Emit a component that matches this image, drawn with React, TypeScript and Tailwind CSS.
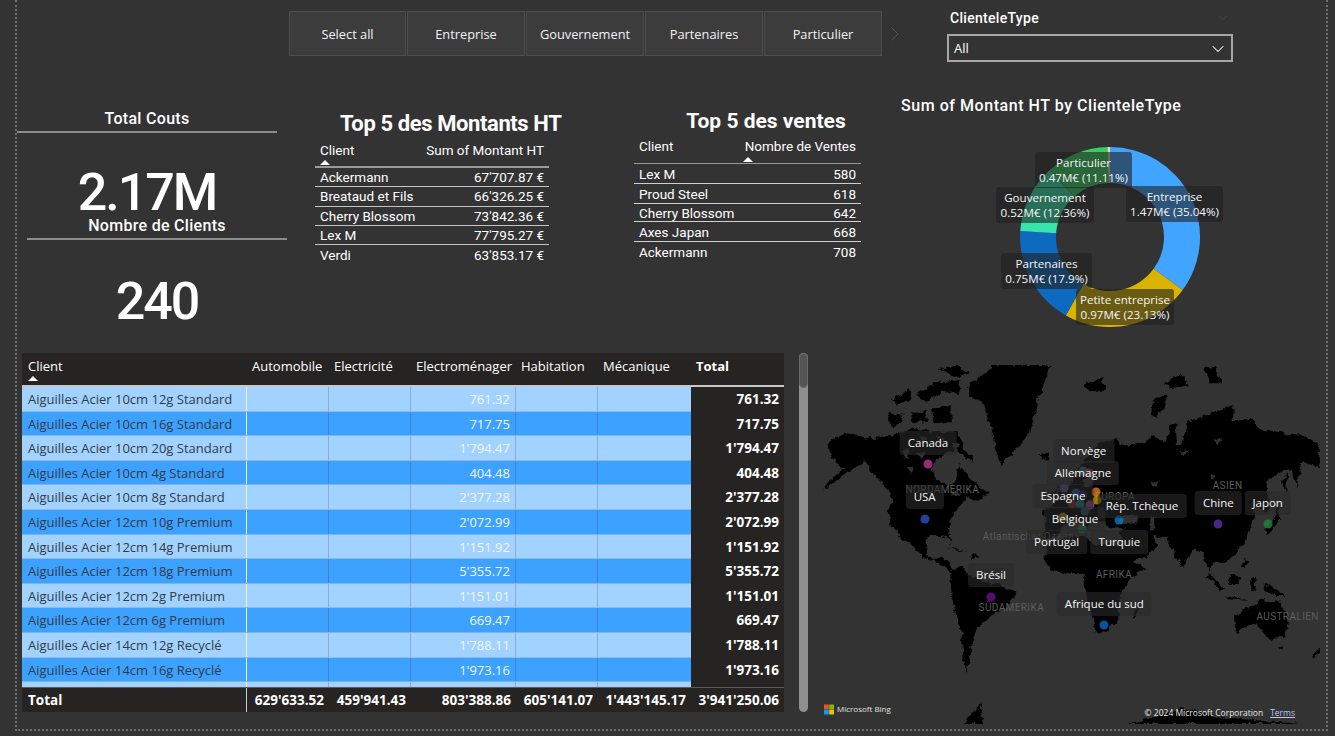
import { ChevronDown, ChevronRight } from 'lucide-react'

const slicers = [
  { label: 'Select all', width: 'w-[117px]' },
  { label: 'Entreprise', width: 'w-[118px]' },
  { label: 'Gouvernement', width: 'w-[118px]' },
  { label: 'Partenaires', width: 'w-[118px]' },
  { label: 'Particulier', width: 'w-[118px]' },
]

const montants = [
  ['Ackermann', "67'707.87 €", 'h-[19px]'],
  ['Breataud et Fils', "66'326.25 €", 'h-[20px]'],
  ['Cherry Blossom', "73'842.36 €", 'h-[19px]'],
  ['Lex M', "77'795.27 €", 'h-[19px]'],
  ['Verdi', "63'853.17 €", 'h-[20px]'],
]

const ventes = [
  ['Lex M', '580', 'h-[20px]'],
  ['Proud Steel', '618', 'h-[20px]'],
  ['Cherry Blossom', '642', 'h-[18px]'],
  ['Axes Japan', '668', 'h-[20px]'],
  ['Ackermann', '708', 'h-[20px]'],
]

const rows = [
  ['Aiguilles Acier 10cm 12g Standard', '761.32'],
  ['Aiguilles Acier 10cm 16g Standard', '717.75'],
  ['Aiguilles Acier 10cm 20g Standard', "1'794.47"],
  ['Aiguilles Acier 10cm 4g Standard', '404.48'],
  ['Aiguilles Acier 10cm 8g Standard', "2'377.28"],
  ['Aiguilles Acier 12cm 10g Premium', "2'072.99"],
  ['Aiguilles Acier 12cm 14g Premium', "1'151.92"],
  ['Aiguilles Acier 12cm 18g Premium', "5'355.72"],
  ['Aiguilles Acier 12cm 2g Premium', "1'151.01"],
  ['Aiguilles Acier 12cm 6g Premium', '669.47'],
  ['Aiguilles Acier 14cm 12g Recyclé', "1'788.11"],
  ['Aiguilles Acier 14cm 16g Recyclé', "1'973.16"],
]

const donut = [
  { pct: 35.04, color: '#41A5FF' },
  { pct: 23.13, color: '#D9B300' },
  { pct: 17.9, color: '#0D6ABF' },
  { pct: 12.36, color: '#37E5AC' },
  { pct: 11.11, color: '#37CF62' },
  { pct: 0.46, color: '#E8DC96' },
]

const donutLabels = [
  { a: 'Particulier', b: '0.47M€ (11.11%)', x: 15, y: 5, w: 97 },
  { a: 'Entreprise', b: '1.47M€ (35.04%)', x: 106, y: 39, w: 97 },
  { a: 'Gouvernement', b: '0.52M€ (12.36%)', x: -24, y: 40, w: 98 },
  { a: 'Partenaires', b: '0.75M€ (17.9%)', x: -19, y: 106, w: 91 },
  { a: 'Petite entreprise', b: '0.97M€ (23.13%)', x: 56, y: 142, w: 98 },
]

const mapFaint = [
  ['NORDAMERIKA', 397, 388],
  ['EUROPA', 915, 408],
  ['ASIEN', 1253, 376],
  ['Atlantischer Ozean', 655, 528],
  ['AFRIKA', 912, 642],
  ['SÜDAMERIKA', 604, 740],
  ['AUSTRALIEN', 1433, 767],
] as const

const mapDots = [
  [354, 311, '#C0339B'], [344, 476, '#2F4FBF'], [543, 710, '#6B0F8A'], [883, 796, '#0A66C2'],
  [1225, 492, '#5A2FA8'], [1373, 492, '#1A8A35'], [928, 480, '#0A78C8'], [820, 332, '#1C7FA0'],
  [838, 338, '#B04A50'], [763, 383, '#6B5AA0'], [798, 398, '#2A5FB0'], [820, 405, '#1A1A80'],
  [857, 396, '#D97A20'], [860, 420, '#C09000'], [785, 433, '#8A2A3A'], [810, 432, '#1A8A7A'],
  [841, 434, '#A84AA0'], [826, 452, '#1A6070'], [758, 470, '#B09020'], [815, 507, '#2A7A40'],
] as const

const mapLabels = [
  ['Canada', 354, 248], ['Norvège', 821, 272], ['Allemagne', 819, 338], ['USA', 344, 412],
  ['Espagne', 759, 407], ['Rép. Tchèque', 996, 437], ['Chine', 1225, 428], ['Japon', 1373, 428],
  ['Belgique', 795, 477], ['Portugal', 740, 545], ['Turquie', 928, 547], ['Brésil', 543, 644],
  ['Afrique du sud', 883, 731],
] as const

// land outlines, 3 units per pixel of the map
const land = [
  // north america
  '30,235 60,212 100,208 170,222 215,215 245,205 290,192 340,195 380,205 420,195 440,245 470,290 440,280 415,250 390,265 360,280 345,300 355,345 395,360 415,350 425,300 450,325 480,360 520,385 490,405 445,400 430,425 410,440 395,475 398,510 405,540 395,520 375,510 340,510 325,530 330,570 350,585 375,575 410,610 395,615 360,590 320,575 285,540 250,515 220,480 212,440 225,405 215,375 195,355 165,320 140,290 110,310 60,345 15,378 50,335 85,310 70,300 45,280',
  // arctic islands
  '210,150 255,145 260,175 225,180',
  '225,105 275,70 285,100 240,120',
  '300,85 350,55 430,45 425,90 380,80 330,110',
  '370,12 420,2 460,25 410,35',
  '345,130 400,120 405,170 350,175',
  '285,145 325,135 330,170 290,175',
  // greenland, iceland
  '450,70 480,40 525,10 525,0 700,0 690,30 680,60 660,120 640,200 600,250 570,280 555,305 540,270 530,210 515,170 495,110 460,90',
  '665,270 695,262 697,282 670,290',
  // caribbean
  '390,545 450,560 425,558',
  '460,570 490,575 465,583',
  // south america
  '399,615 429,605 469,635 529,655 599,680 579,715 529,750 484,785 464,845 449,925 439,875 434,805 404,695',
  // africa, madagascar
  '679,575 709,525 760,515 809,515 830,535 880,540 925,540 950,590 985,610 969,615 930,655 909,695 904,765 869,800 839,807 824,750 809,695 799,625 729,625 699,615',
  '944,760 969,705 964,735 954,760',
  // eurasia
  '680,505 690,470 675,440 720,415 745,375 770,345 790,300 850,230 900,225 935,245 950,240 1010,215 1050,230 1060,180 1075,175 1080,235 1095,240 1110,170 1170,150 1220,130 1245,120 1250,165 1310,165 1330,190 1430,210 1450,205 1505,240 1508,310 1480,300 1460,290 1445,330 1440,370 1425,315 1385,320 1345,360 1350,400 1370,410 1345,440 1320,420 1305,470 1290,520 1260,560 1230,590 1190,590 1180,620 1210,670 1170,600 1155,560 1130,550 1095,610 1065,550 1050,520 1010,515 1018,545 985,575 950,590 925,540 905,500 930,490 880,490 860,470 830,465 810,490 775,450 740,480 720,510 690,520',
  '725,370 745,355 755,405 725,415',
  '705,380 720,378 718,398 702,398',
  '1010,110 1050,90 1040,130 1020,155 1005,150',
  // east and south east asia, oceania
  '1345,495 1375,455 1385,415 1390,465 1350,510',
  '1395,350 1410,320 1408,380',
  '1174,625 1225,675 1210,675 1170,635',
  '1225,690 1300,705 1235,700',
  '1234,630 1270,630 1265,660 1238,660',
  '1300,640 1320,635 1315,675 1300,670',
  '1279,575 1290,590 1285,615 1275,600',
  '1339,655 1404,690 1380,690 1345,675',
  // australia, new zealand
  '1254,750 1279,735 1329,705 1369,715 1384,700 1419,775 1399,815 1359,825 1319,775 1259,805',
  '1384,845 1399,845 1395,855',
  '1484,875 1514,845 1510,860 1495,880',
  // north east of the map
  '800,60 850,40 870,70 820,80',
  '1040,50 1090,30 1120,60 1060,70',
  '1160,15 1190,5 1215,55 1180,55',
  // antarctica
  '440,1077 470,1035 490,1015 500,1077',
  '929,1077 1000,1060 1100,1030 1200,1055 1449,1077',
]

// seas and lakes cut back out of the land
const water = [
  '900,458 960,450 965,472 910,475',
  '1000,455 1015,458 1012,498 1000,495',
  '800,345 835,320 825,360 805,370',
  '350,300 410,300 405,345 360,340',
  '1340,350 1380,330 1370,360',
  '255,255 275,250 270,280',
  '300,265 325,258 318,285',
  '270,310 290,300 285,330',
  '400,230 425,240 420,262',
  '360,215 385,220 372,240',
  '310,215 330,222 315,238',
  '410,375 430,385 405,395',
  '1190,225 1215,220 1205,240',
  '1180,330 1200,335 1185,350',
  '1090,260 1110,255 1100,270',
  '1000,345 1030,350 1010,362',
]

function sector(start: number, end: number) {
  const R = 90
  const r = 54
  const a0 = (start / 100) * Math.PI * 2 - Math.PI / 2
  const a1 = (end / 100) * Math.PI * 2 - Math.PI / 2
  const large = end - start > 50 ? 1 : 0
  const p = (rad: number, a: number) => `${100 + rad * Math.cos(a)} ${100 + rad * Math.sin(a)}`
  return `M${p(R, a0)} A${R} ${R} 0 ${large} 1 ${p(R, a1)} L${p(r, a1)} A${r} ${r} 0 ${large} 0 ${p(r, a0)}Z`
}

function SortArrow({ className }: { className: string }) {
  return <div className={`w-0 h-0 border-x-[5px] border-x-transparent border-b-[5px] border-b-white ${className}`} />
}

function Kpi({ title, value, className, valueClass }: { title: string; value: string; className: string; valueClass: string }) {
  return (
    <div className={`w-[260px] ${className}`}>
      <div className="h-[27px] border-b-2 border-[#8c8c8c] text-center text-white text-[16px] leading-[26px] font-medium tracking-[0.3px] whitespace-nowrap">
        {title}
      </div>
      <div className={`text-center text-white text-[52px] leading-[44px] font-medium tracking-[-2px] ${valueClass}`}>{value}</div>
    </div>
  )
}

export default function App() {
  let acc = 0
  return (
    <div className="w-[1335px] h-[736px] bg-[#333333] overflow-hidden font-[Roboto,sans-serif]">
      <div className="ml-[15px] w-[1313px] h-[731px] border-x-2 border-b-2 border-dotted border-[#6e6e6e]">
        {/* top slicers */}
        <div className="flex h-[56px] pt-[11px]">
          <div className="flex ml-[272px] gap-px h-[45px] font-['Open_Sans',sans-serif]">
            {slicers.map((s) => (
              <div
                key={s.label}
                className={`${s.width} flex items-center justify-center pt-[2px] bg-[#3c3c3c] border border-[#4d4d4d] text-[#f2f2f2] text-[12.8px]`}
              >
                {s.label}
              </div>
            ))}
          </div>
          <ChevronRight className="text-[#555555] mt-[11px] ml-[1px]" size={24} strokeWidth={1} />
          <div className="ml-[40px] w-[286px] -mt-[4px]">
            <div className="flex items-center justify-between h-[27px] pb-[4px] pl-[3px] pr-[3px] text-white text-[14px] font-medium tracking-[0.3px]">
              ClienteleType
              <ChevronDown className="text-[#555555] -mt-[2px]" size={14} strokeWidth={1} />
            </div>
            <div className="h-[28px] border-2 border-[#a6a6a6] flex items-center justify-between pl-[5px] pr-[3px] pt-[2px] text-white text-[13px] font-['Open_Sans',sans-serif]">
              All
              <ChevronDown className="text-white" size={20} strokeWidth={1.25} />
            </div>
          </div>
        </div>

        {/* kpis, top 5 tables and donut */}
        <div className="flex h-[297px]">
          <div className="w-[270px] pt-[50px] text-white">
            <Kpi title="Total Couts" value="2.17M" className="" valueClass="mt-[38px]" />
            <Kpi title="Nombre de Clients" value="240" className="ml-[10px] -mt-[2px]" valueClass="mt-[40px]" />
          </div>

          <div className="ml-[28px] w-[234px] pt-[55px] text-white">
            <div className="pl-[25px] text-[22px] leading-[26px] font-bold tracking-[-0.4px] whitespace-nowrap">Top 5 des Montants HT</div>
            <div className="flex justify-between h-[24px] mt-[1px] px-[5px] text-[13.5px] leading-[24px] font-normal">
              <span>Client</span>
              <span>Sum of Montant HT</span>
            </div>
            <SortArrow className="ml-[5px] -mt-[2px] mb-[1px]" />
            <div className="border-t-2 border-[#9a9a9a]">
              {montants.map(([name, val, h], i) => (
                <div
                  key={name}
                  className={`${h} flex items-center justify-between px-[5px] text-[13.5px] ${i < 4 ? 'border-b border-[#c4c4c4]' : ''}`}
                >
                  <span>{name}</span>
                  <span>{val}</span>
                </div>
              ))}
            </div>
          </div>

          <div className="ml-[85px] w-[227px] pt-[52px] text-white">
            <div className="text-center text-[21px] leading-[26px] font-bold pl-[37px] whitespace-nowrap">Top 5 des ventes</div>
            <div className="flex justify-between h-[24px] px-[5px] text-[13.5px] leading-[24px]">
              <span>Client</span>
              <span>Nombre de Ventes</span>
            </div>
            <SortArrow className="ml-[109px] -mt-[1px] mb-[1px]" />
            <div className="border-t border-[#9a9a9a]">
              {ventes.map(([name, val, h], i) => (
                <div
                  key={name}
                  className={`${h} flex items-center justify-between px-[5px] pt-[1px] text-[13.5px] ${i < 4 ? 'border-b border-[#d0d0d0]' : ''}`}
                >
                  <span>{name}</span>
                  <span>{val}</span>
                </div>
              ))}
            </div>
          </div>

          <div className="ml-[40px] w-[330px] pt-[40px]">
            <div className="text-white text-[16px] leading-[20px] font-medium tracking-[0.55px] whitespace-nowrap">
              Sum of Montant HT by ClienteleType
            </div>
            <div className="relative ml-[119px] mt-[31px] w-[180px] h-[180px] font-['Open_Sans',sans-serif]">
              <svg viewBox="10 10 180 180" className="w-[180px] h-[180px]">
                {donut.map((d) => {
                  const start = acc
                  acc += d.pct
                  return <path key={d.color} d={sector(start, acc)} fill={d.color} />
                })}
              </svg>
              {donutLabels.map((l) => (
                <div
                  key={l.a}
                  className="absolute h-[36px] rounded-[3px] bg-[#202020]/60 text-center text-[#f4f4f4] text-[11.6px] leading-[15px] pt-[3px] whitespace-nowrap"
                  style={{ left: l.x, top: l.y, width: l.w }}
                >
                  <div>{l.a}</div>
                  <div>{l.b}</div>
                </div>
              ))}
            </div>
          </div>
        </div>

        {/* matrix, scrollbar and map */}
        <div className="flex">
          <div className="ml-[5px] w-[762px] h-[359px] bg-[#252423] font-['Open_Sans',sans-serif] flex flex-col">
            <div className="flex h-[34px] border-b-2 border-[#c8c8c8] text-[13px] text-white whitespace-nowrap">
              <div className="w-[225px] relative pl-[6px] pt-[4px]">
                Client
                <SortArrow className="absolute left-[6px] top-[23px]" />
              </div>
              <div className="w-[82px] pl-[5px] pt-[4px]">Automobile</div>
              <div className="w-[82px] pl-[5px] pt-[4px]">Electricité</div>
              <div className="w-[105px] pl-[5px] pt-[4px]">Electroménager</div>
              <div className="w-[82px] pl-[5px] pt-[4px]">Habitation</div>
              <div className="w-[93px] pl-[5px] pt-[4px]">Mécanique</div>
              <div className="flex-1 pl-[5px] pt-[4px] font-bold">Total</div>
            </div>
            <div className="flex-1 overflow-hidden">
              {rows.map(([name, val], i) => (
                <div key={name} className="flex h-[24.6px] text-[13px] leading-[25px]">
                  <div className={`flex flex-1 border-b ${i % 2 === 0 ? 'bg-[#A2D2FF] border-[#8fb9e2]' : 'bg-[#3DA1FF] border-[#7fb4e6]'}`}>
                    <div className="w-[225px] pl-[6px] text-[#333b45] border-r border-[#e8f3ff] whitespace-nowrap">{name}</div>
                    <div className={`w-[82px] border-r ${i % 2 === 0 ? 'border-[#8aaed2]' : 'border-[#3a87d1]'}`} />
                    <div className={`w-[82px] border-r ${i % 2 === 0 ? 'border-[#8aaed2]' : 'border-[#3a87d1]'}`} />
                    <div className={`w-[105px] pr-[5px] text-right text-[#f2f8ff] border-r ${i % 2 === 0 ? 'border-[#8aaed2]' : 'border-[#3a87d1]'}`}>{val}</div>
                    <div className={`w-[82px] border-r ${i % 2 === 0 ? 'border-[#8aaed2]' : 'border-[#3a87d1]'}`} />
                    <div className="flex-1" />
                  </div>
                  <div className="w-[93px] pr-[5px] text-right text-white text-[13.5px] font-bold">{val}</div>
                </div>
              ))}
              <div className="flex h-[5px]">
                <div className="flex flex-1 bg-[#A2D2FF]">
                  <div className="w-[225px] border-r border-[#e8f3ff]" />
                  <div className="w-[82px] border-r border-[#8aaed2]" />
                  <div className="w-[82px] border-r border-[#8aaed2]" />
                  <div className="w-[105px] border-r border-[#8aaed2]" />
                  <div className="w-[82px] border-r border-[#8aaed2]" />
                </div>
                <div className="w-[93px]" />
              </div>
            </div>
            <div className="flex h-[25px] border-t border-[#5a5a5a] text-white text-[13.5px] font-bold leading-[24px] whitespace-nowrap">
              <div className="w-[225px] pl-[6px] border-r border-[#c8c8c8]">Total</div>
              <div className="w-[82px] pr-[5px] text-right">629'633.52</div>
              <div className="w-[82px] pr-[5px] text-right">459'941.43</div>
              <div className="w-[105px] pr-[5px] text-right">803'388.86</div>
              <div className="w-[82px] pr-[5px] text-right">605'141.07</div>
              <div className="w-[93px] pr-[5px] text-right">1'443'145.17</div>
              <div className="flex-1 pr-[5px] text-right">3'941'250.06</div>
            </div>
          </div>

          <div className="ml-[15px] w-[9px] h-[359px] rounded-full bg-[#8f8f8f] overflow-hidden">
            <div className="h-[35px] rounded-full bg-[#555555] border border-[#6a6a6a]" />
          </div>

          <div className="relative ml-[9px] mt-[12px] w-[503px] h-[359px] overflow-hidden font-['Open_Sans',sans-serif]">
            <svg viewBox="0 0 1509 1077" className="w-[503px] h-[359px]">
              <defs>
                <filter id="coast" x="-5%" y="-5%" width="110%" height="110%">
                  <feTurbulence type="fractalNoise" baseFrequency="0.045" numOctaves="4" seed="7" result="n" />
                  <feDisplacementMap in="SourceGraphic" in2="n" scale="22" xChannelSelector="R" yChannelSelector="G" />
                </filter>
              </defs>
              <g filter="url(#coast)">
                {land.map((pts) => (
                  <polygon key={pts} points={pts} fill="#000000" />
                ))}
                {water.map((pts) => (
                  <polygon key={pts} points={pts} fill="#333333" />
                ))}
              </g>
            </svg>
            {mapFaint.map(([t, x, y]) => (
              <span
                key={t}
                className="absolute -translate-x-1/2 -translate-y-1/2 text-[#5c5c5c] text-[10px] tracking-[0.4px] whitespace-nowrap font-[Roboto,sans-serif]"
                style={{ left: x / 3 - 7, top: y / 3 - 5 }}
              >
                {t}
              </span>
            ))}
            {mapDots.map(([x, y, c]) => (
              <span
                key={`${x}-${y}`}
                className="absolute w-[9px] h-[9px] rounded-full -translate-x-1/2 -translate-y-1/2 opacity-80"
                style={{ left: x / 3 - 7, top: y / 3 - 5, backgroundColor: c }}
              />
            ))}
            {mapLabels.map(([t, x, y]) => (
              <span
                key={t}
                className="absolute -translate-x-1/2 -translate-y-1/2 h-[24px] px-[8px] rounded-[3px] bg-[#2a2a2a]/60 text-[#f4f4f4] text-[11.5px] leading-[24px] whitespace-nowrap"
                style={{ left: x / 3 - 7, top: y / 3 - 5 }}
              >
                {t}
              </span>
            ))}
            <div className="absolute left-[7px] bottom-[9px] flex items-center gap-[3px] text-[#e0e0e0] text-[8px]">
              <svg viewBox="0 0 10 10" className="w-[10px] h-[11px]">
                <rect x="0" y="0" width="4.8" height="4.8" fill="#F25022" />
                <rect x="5.2" y="0" width="4.8" height="4.8" fill="#7FBA00" />
                <rect x="0" y="5.2" width="4.8" height="4.8" fill="#00A4EF" />
                <rect x="5.2" y="5.2" width="4.8" height="4.8" fill="#FFB900" />
              </svg>
              Microsoft Bing
            </div>
            <div className="absolute right-[25px] bottom-[4px] flex gap-[7px] text-[#e8e8e8] text-[8.5px] whitespace-nowrap">
              <span>© 2024 Microsoft Corporation</span>
              <span className="underline text-[#b8c8f0]">Terms</span>
            </div>
          </div>
        </div>
      </div>
    </div>
  )
}
